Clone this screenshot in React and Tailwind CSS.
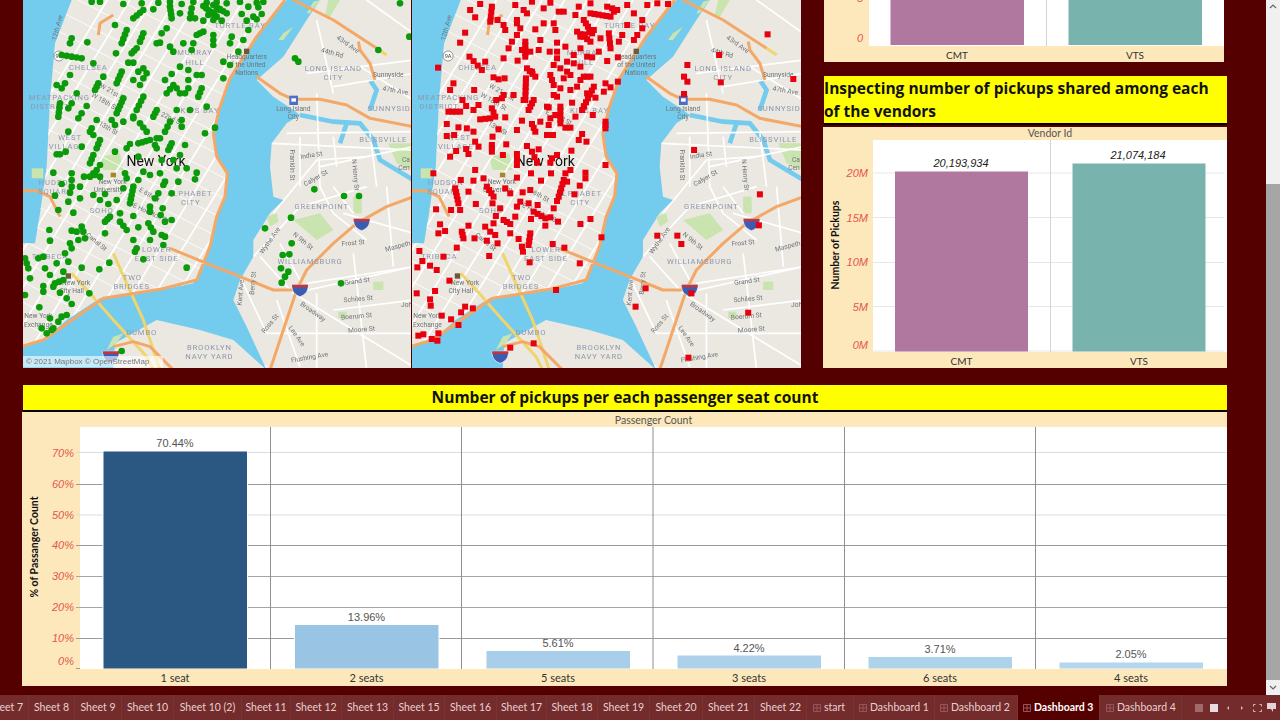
// strokes of dots read off the map: [x, y] is one dot, [x1, y1, x2, y2, n] is a run of n dots
const greenDots = [
  [275,5],[300,5],[370,12],[425,10],[475,8],[510,6],[545,12],[580,6],[620,8],[650,6],[680,10],[720,6],[770,8],[790,6],[1200,10],
  [400,55,430,30,4],[460,28],[510,20,515,55,4],[540,40],[575,25,570,55,3],[610,18,650,50,6],[640,15,680,40,5],[660,30,625,45,3],[745,20],[775,22],[725,42],[760,50],[785,42],[740,62],[770,58],[585,55],[610,62],[640,60],[665,62],
  [345,75],[380,90,365,130,4],[430,100,420,125,3],[410,145,395,160,3],[470,130],[480,128],[510,140,520,155,2],[485,100],[500,85],[550,130],[580,130],[575,150],[610,95,590,105,3],[640,105,640,135,3],[690,130],[695,110],[730,120],[745,90],[715,155],[670,185],[690,195],[670,235],
  [1135,150],[1228,110],[885,175,895,185,2],[215,115,210,130,2],[262,127],[348,160],[385,188],[400,188],[185,165,245,175,5],[280,190],[210,225],[195,250],[170,255],[185,265],[230,280],[310,230],[295,250,285,270,3],[365,215,350,250,4],
  [415,215],[430,205],[440,220],[430,235],[400,240],[420,255],[515,222],[495,240],[540,200],[565,210],[590,225],[605,225],[565,240],[500,280,520,255,3],[530,265],[540,280],[565,265],[555,280],[605,265,595,290,3],
  [370,295,350,340,5],[430,290,410,330,4],[400,350],[470,330,460,350,3],[530,330],[570,330],[620,320],[180,310,175,350,4],[215,310],[205,325],[260,318],[245,340],[235,355],[290,360],[275,385],[270,395],[280,405],[335,360,345,375,2],[370,365],[400,355],[510,365,495,395,3],[545,360,545,380,2],[615,400],[645,383],[205,395],
  [420,370,440,395,3],[415,430,450,420,4],[470,415],[480,415],[515,430,505,450,3],[555,435],[300,420,290,445,3],[245,440],[170,463],[180,463],[197,455],[345,455],[380,445],[390,432],[465,435],[470,445],[280,465,270,490,3],[300,495],[290,510,270,530,3],[285,525],[300,530],[252,530],
  [485,480],[520,480],[540,465],[530,505],[560,505],[590,518],[585,538],[415,470],[430,515],[450,525],[480,520],[375,520],[380,535],[415,540],[495,545],[490,555],[535,545],[160,518],[185,552],[215,520,215,560,3],[240,560],[240,595],[165,587],[210,578],[205,605],[280,585],[315,582],[300,600],[370,565],[350,600],[325,612],[400,560,390,610,5],[475,580,465,595,2],[515,580],
  [450,620],[450,635],[488,625],[482,645],[515,660],[495,665],[175,630],[220,638],[360,640],[330,650,315,665,3],[400,648],[360,665,380,690,3],[415,682],[445,670,460,695,3],[148,690],[150,722],[215,692],[230,695],[245,680],[250,695],[315,700],[235,720],[255,715],[210,730,215,745,2],[400,720],[450,720],[485,705],[495,710],[490,735],[410,745,405,755,2],
  [195,760],[130,770],[115,775],[170,790],[205,785],[75,775,85,805,3],[135,805],[150,825],[190,815],[245,803],[298,808],[328,788],[430,778],[560,803],[90,835],[130,858],[130,875],[165,850,190,840,3],[160,860],[180,878],[75,885],[268,880],[200,895],[215,912],[118,922],[150,955],[185,950],[200,945],[175,965],[160,985],[125,985],[140,1000],[155,990],[365,1053],
  [795,685],[873,653],[875,730],[848,765],[868,763],[843,805],[865,815],[855,830],[845,848],[1023,850],[943,568],[1032,588],[1077,588],
];

const redDots = [
  [180,30],[195,52],[210,12],[245,20,240,65,4],[262,60],[315,15],[320,60],[350,40],[340,30],[365,5],[400,25],[420,8],[445,35],[460,35],[495,45],[505,20],[540,10],
  [520,60,545,100,5],[540,40,600,50,6],[590,20,620,30,3],[650,15],[670,40],[695,60],[695,85],[710,15],[740,10],[772,12],[650,75],[610,35],[500,95,540,125,5],[510,110,550,90,4],[570,115],[595,100,600,145,4],[635,105],[625,125],[680,105],[670,120],
  [280,75],[285,90],[320,70],[330,85],[320,105],[305,125],[295,145],[400,70],[375,88],[435,90],[430,70],[165,98],[150,128],[390,120],[440,128],[465,140],[345,125,345,170,5],[335,150],[360,155],[385,150],[418,155],[440,155],[440,175],[490,165,490,190,2],[510,145],[565,155],[545,172],[590,183],[622,172],[530,170],
  [178,170,215,210,4],[225,185],[280,175],[322,182],[84,203],[430,195,450,205,2],[470,185],[510,200],[350,205,375,230,4],[365,215],[420,225,430,255,3],[470,215,480,225,2],[460,235],[250,232],[265,238],[283,235],[347,235,345,300,6],[520,230,540,230,3],[510,240,500,260,2],[585,250],[600,262],[622,245],[580,275],
  [130,250],[120,270],[192,270],[280,285,275,295,2],[310,285],[450,265],[480,270],[430,285,440,290,2],[550,260,515,330,7],[530,280],[555,293],[830,195],[820,230,830,245,2],[820,282],[930,247],[925,165],[1070,103],[1147,237],
  [157,300],[258,300],[370,300,355,330,4],[340,300],[410,320],[485,308],[115,335,150,335,4],[168,318],[205,315,190,330,2],[245,325,255,350,3],[415,322],[450,320,450,370,5],[435,345],[495,350],[547,345],[520,320],[285,352],[210,358,240,355,3],[110,372],[145,382],[170,385],[190,395],[265,388],[335,362],[320,390],[365,372,375,395,3],[390,365],[420,355],[415,375],[465,383],[480,383],[585,365,585,385,3],
  [110,408],[132,405],[247,410],[410,405],[428,405],[515,402],[505,420],[528,425],[195,425,205,440,2],[245,435,245,455,3],[288,433],[350,438],[385,448],[138,453],[120,470],[168,447],[175,462],[278,465],[320,462,320,495,3],[365,455,380,488,3],[425,475,440,465,2],[420,488],[483,452],[585,495],
  [70,520],[195,510],[152,540],[190,542],[220,535],[320,533],[362,520],[422,520],[480,510],[465,520],[525,518],[525,535],[392,542],[460,540,445,590,5],[470,545],[508,557],[492,583],[440,603],[230,560,250,590,4],[285,565,300,580,2],[337,577],[175,575],[360,570],[135,565,145,610,5],[150,630],[78,628],[123,630],[197,612],[247,610],[330,605,320,620,2],[355,610],[382,615],[430,625],
  [270,625],[370,635,405,655,4],[420,652],[257,648],[250,670],[280,660,300,672,3],[315,650],[362,657],[443,665],[510,672],[540,657],[405,677],[90,673],[85,700],[105,693],[175,677],[225,680],[155,695,160,715,3],[240,695,255,705,2],[193,715],[230,722],[262,730],[300,700],[325,717],[360,700,355,735,4],[427,732],[335,740,338,755,2],[462,743],[573,712],
  [140,743],[28,753],[37,783],[22,802],[60,797],[80,810],[100,770],[237,768],[358,787],[508,790],[118,842],[20,880],[75,873],[60,898],[62,917],[437,870],[188,925],[165,920],[153,937],[95,947],[123,958],[145,975],[85,1000],[40,1003],[25,1007],[65,1017],[82,1022],[300,1043],[370,1030],
  [740,707],[800,707],[812,732],[705,865],[675,920],[842,880],[1012,938],[833,1073],[1047,583],[1044,676],[850,450],
];

function expandDots(list) {
  const out = [];
  list.forEach((d) => {
    if (d.length === 2) out.push(d);
    else {
      const [x1, y1, x2, y2, n] = d;
      for (let i = 0; i < n; i++) {
        const t = n === 1 ? 0 : i / (n - 1);
        out.push([x1 + (x2 - x1) * t, y1 + (y2 - y1) * t]);
      }
    }
  });
  return out;
}

const manhattan = '215,0 860,0 770,110 690,240 660,320 640,400 650,470 682,520 675,590 650,650 630,740 610,800 580,850 480,870 300,895 200,960 130,1020 69,1042 69,730 105,730 120,640 140,500 150,300 165,130';
const brooklyn = '960,0 1240,0 1240,560 1240,1110 800,1110 740,980 700,900 720,840 760,770 760,720 810,640 850,600 820,590 810,500 815,430 860,370 900,345 880,330 820,290 770,240 850,170 920,60';

const orange = [
  'M855,0 L770,110 L690,235 L660,320 L640,400 L650,470 L682,520 L675,590 L650,650 L630,740 L610,790 L590,840 L480,868 L310,895 L230,950 L130,1020 L69,1038',
  'M880,0 L1000,60 L1130,145 M1075,125 L1080,150 L1110,190 L1125,240',
  'M770,230 L840,280 L880,298 L960,298 L1040,315 L1110,355 L1240,380',
  'M510,745 L620,790 L720,830 L820,870 L890,870 L920,810 L1000,730 L1070,670 L1160,620 L1240,590',
  'M890,870 L860,960 L810,1110',
  'M340,45 L300,70 L295,105',
  'M340,1040 L400,1025 L450,1040 L520,1110',
  'M69,572 L110,572 L150,590 L180,650',
];

const yellow = [
  'M340,760 L380,850 L430,960 L480,1110',
  'M215,820 L270,880 L340,960 L440,1070 L460,1110',
  'M1130,145 L1160,165',
];

const whites = [
  'M950,280 L960,560 L1000,640 L1100,720 M815,430 L1240,450 M860,400 L1240,395 M960,500 L1240,440',
  'M820,640 L950,480 L1100,470 M760,770 L900,620 L1100,560 M780,770 L880,880 L1240,800 M720,830 L800,1000',
  'M880,880 L1240,1100 M920,850 L1240,800 M950,880 L950,1110 M1060,760 L1100,1110 M800,1000 L1240,1000',
  'M920,220 L1240,180 M950,60 L1000,280 M1080,200 L1240,300 M1000,260 L1240,220 M1100,0 L1240,100',
  'M840,730 L900,840 M1000,560 L1060,640 M1160,560 L1180,800 M1000,410 L1010,500 M1110,400 L1130,560',
  'M900,410 L900,560 M1000,930 L1240,900 M830,900 L900,1100 M1030,640 L1240,700 M480,1000 L760,1040 M500,1060 L800,1100',
];

const parks = [
  [880,660,960,640,1000,690,950,720],[1060,590,1085,590,1085,635,1060,635],[1165,430,1240,430,1240,510,1190,490],
  [300,470,360,460,370,510,310,510],[95,505,130,505,130,535,95,535],[800,650,830,640,835,665,810,680],
  [985,0,1020,0,990,50,975,45],[850,100,880,80,850,120,835,120],[940,5,960,0,930,40,920,40],[340,1010,370,1000,350,1030,320,1050],
  [1120,845,1150,845,1150,870,1120,870],[1015,935,1040,935,1040,955,1015,955],[1065,610,1085,610,1085,640,1065,640],
];

const districts = [
  ['CHELSEA',265,210],['MEATPACKING',178,300],['DISTRICT',150,328],['WEST',210,421],['VILLAGE',200,448],['HUDSON',170,556],['SQUARE',165,583],
  ['SOHO',305,640],['TRIBECA',150,778],['TWO',397,840],['BRIDGES',395,868],['LOWER',470,756],['EAST SIDE',470,783],['ALPHABET',570,588],['CITY',572,615],
  ['KIPS BAY',600,338],['MURRAY',585,165],['HILL',585,195],['TURTLE BAY',720,83],['LONG ISLAND',1000,214],['CITY',1000,241],['SUNNYSIDE',1175,333],
  ['BLISSVILLE',1150,426],['GREENPOINT',965,626],['WILLIAMSBURG',930,793],['DUMBO',425,1006],['BROOKLYN',628,1051],['NAVY YARD',628,1076],
];

const streets = [
  ['Franklin St',870,495,90],['India St',935,472,-8],['Calyer St',950,540,-30],['N Henry St',1060,525,85],['Wythe Ave',815,725,-55],['N 9th St',905,728,40],
  ['Frost St',1060,735,-5],['Grand St',1072,850,-8],['Schiles St',1075,903,-5],['Boerum St',1070,955,-5],['Moore St',1085,995,-5],['Broadway',935,940,35],
  ['Flushing Ave',930,1078,-10],['Lee Ave',885,1012,55],['Ross St',815,975,-50],['Kent Ave',728,878,-85],['Berry St',765,850,-85],['43rd Ave',1040,138,35],
  ['44th Rd',995,165,15],['47th Ave',1185,278,10],['Sunnyside',1165,230,0],['12th Ave',178,85,-75],['Canal St',285,730,40],['E Houston St',450,645,25],
  ['E 6th St',445,590,30],['E 22nd St',505,358,25],['W 21st St',335,282,30],['W 18th St',310,310,30],['13th St',322,390,30],['Ca',1218,485,0],['Cen',1212,510,0],
  ['Headquarters',740,178,0],['of the United',740,202,0],['Nations',740,226,0],['Long Island',880,332,0],['City',880,356,0],['New York',338,551,0],['University',325,577,0],
  ['New York',228,855,0],['City Hall',215,878,0],['New York',115,955,0],['Exchange',115,980,0],['Maspeth',1195,745,-15],['Joh',1220,920,0],
];

function Shield({ x, y }) {
  return (
    <g>
      <path d={`M${x - 24},${y - 14} h48 c2,20 -8,30 -24,36 c-16,-6 -26,-16 -24,-36 z`} fill="#3c5cb0" stroke="#fff" strokeWidth="2" />
      <rect x={x - 24} y={y - 14} width="48" height="8" fill="#c8343c" />
    </g>
  );
}

// the basemap, drawn in 3x coordinates so it lines up with the crops
function MapBase({ children, id, w }) {
  const avenues = [];
  for (let i = -6; i < 22; i++) avenues.push(`M${i * 68 + 60},1100 L${i * 68 + 730},0`);
  const cross = [];
  for (let i = -2; i < 26; i++) cross.push(`M0,${i * 62 - 120} L900,${i * 62 + 340}`);
  return (
    <svg viewBox="69 0 1164 1104" className={`${w} block h-[368px] shrink-0 blur-[0.4px]`} preserveAspectRatio="none">
      <defs>
        <clipPath id={id}><polygon points={manhattan} /></clipPath>
        <clipPath id={`${id}b`}><polygon points={brooklyn} /></clipPath>
      </defs>
      <rect x="60" y="0" width="1180" height="1110" fill="#73cbee" />
      <polygon points={manhattan} fill="#ebe8e1" />
      <polygon points={brooklyn} fill="#ebe8e1" />
      <polygon points="340,1110 345,1030 470,960 600,990 700,1020 800,1110" fill="#ebe8e1" />
      <path d="M900,345 L1000,365 L1080,370 L1120,420 L1140,480 L1240,540 M1040,370 L1020,430 M1110,240 L1130,270 L1110,330" fill="none" stroke="#73cbee" strokeWidth="14" />
      {parks.map((p, i) => (
        <polygon key={i} points={p.join(' ')} fill="#c9e4ae" />
      ))}
      <g clipPath={`url(#${id})`} fill="none" stroke="#fff">
        <path d={avenues.join(' ')} strokeWidth="5" />
        <path d={cross.join(' ')} strokeWidth="2.5" />
      </g>
      <g clipPath={`url(#${id}b)`}>
        <path d={whites.join(' ')} fill="none" stroke="#fff" strokeWidth="5" />
      </g>
      <path d={yellow.join(' ')} fill="none" stroke="#f0d46c" strokeWidth="9" />
      <path d={orange.join(' ')} fill="none" stroke="#f3a868" strokeWidth="9" strokeLinejoin="round" />
      {districts.map(([t, x, y], i) => (
        <text key={i} x={x} y={y} textAnchor="middle" fontSize="23" letterSpacing="2.5" fill="#8f97ad" fontFamily="Roboto, sans-serif">{t}</text>
      ))}
      {streets.map(([t, x, y, r], i) => (
        <text key={i} x={x} y={y} textAnchor="middle" fontSize="20" fill="#6f7478" fontFamily="Roboto, sans-serif" transform={`rotate(${r} ${x} ${y})`}>{t}</text>
      ))}
      <text x="468" y="497" textAnchor="middle" fontSize="42" fill="#111" fontFamily="Roboto, sans-serif">New York</text>
      <Shield x={1085} y={670} />
      <Shield x={900} y={868} />
      <Shield x={333} y={1068} />
      <rect x="868" y="287" width="26" height="28" fill="#4a6fc4" />
      <rect x="874" y="295" width="14" height="10" fill="#fff" />
      <circle cx="177" cy="168" r="15" fill="#fff" stroke="#666" strokeWidth="2" />
      <text x="177" y="175" textAnchor="middle" fontSize="17" fill="#444" fontFamily="Roboto, sans-serif">9A</text>
      <rect x="732" y="146" width="16" height="16" fill="#6a5a3a" />
      <rect x="332" y="518" width="16" height="14" fill="#a5882c" />
      <rect x="197" y="820" width="16" height="16" fill="#6a5a3a" />
      {children}
    </svg>
  );
}

function Credit() {
  return (
    <g>
      <rect x="69" y="1068" width="420" height="34" fill="#fff" opacity="0.6" />
      <text x="78" y="1093" fontSize="24" fill="#777" fontFamily="Liberation Sans, sans-serif">© 2021 Mapbox © OpenStreetMap</text>
    </g>
  );
}

const fontLabel = 'Lato, sans-serif';
const fontValue = 'Liberation Sans, sans-serif';

function Tick({ x, y, children }) {
  return <text x={x} y={y} textAnchor="end" fontSize="11" fontStyle="italic" fill="#e4574c" fontFamily={fontValue}>{children}</text>;
}

function VendorChart() {
  const grid = [[173, '20M', 177], [217.5, '15M', 222], [262.5, '10M', 266], [306.5, '5M', 311], [351, '0M', 349]];
  return (
    <svg viewBox="823 140 404 228" className="block h-[228px] w-[404px]">
      <rect x="873" y="140" width="354" height="212" fill="#fff" />
      {grid.map(([y]) => <line key={y} x1="873" x2="1224" y1={y} y2={y} stroke="#e6e6e6" />)}
      <line x1="1050.5" x2="1050.5" y1="127" y2="352" stroke="#d4d4d4" />
      <rect x="895" y="171.5" width="133" height="180" fill="#b0779f" />
      <rect x="1072.5" y="163.5" width="133" height="188" fill="#78b4ad" />
      <text x="961" y="167" textAnchor="middle" fontSize="11" fontStyle="italic" fill="#222" fontFamily={fontValue}>20,193,934</text>
      <text x="1138" y="159" textAnchor="middle" fontSize="11" fontStyle="italic" fill="#222" fontFamily={fontValue}>21,074,184</text>
      {grid.map(([y, t, ty]) => <Tick key={t} x="868" y={ty}>{t}</Tick>)}
      <text transform="translate(839 245) rotate(-90)" textAnchor="middle" fontSize="10.5" fontWeight="700" fill="#111" fontFamily={fontLabel}>Number of Pickups</text>
      <text x="961.5" y="365" textAnchor="middle" fontSize="10" fill="#333" fontFamily={fontLabel}>CMT</text>
      <text x="1139" y="365" textAnchor="middle" fontSize="10" fill="#333" fontFamily={fontLabel}>VTS</text>
    </svg>
  );
}

function TopChart() {
  return (
    <svg viewBox="824 0 400 62" className="block h-[62px] w-[400px]">
      <rect x="869" y="0" width="355" height="46" fill="#fff" />
      <line x1="1046.5" x2="1046.5" y1="0" y2="46" stroke="#d4d4d4" />
      <rect x="890.5" y="0" width="133.5" height="45" fill="#b0779f" />
      <rect x="1068.5" y="0" width="133.5" height="45" fill="#78b4ad" />
      <Tick x="863" y="2">5</Tick>
      <Tick x="863" y="42">0</Tick>
      <text x="957" y="59" textAnchor="middle" fontSize="10" fill="#333" fontFamily={fontLabel}>CMT</text>
      <text x="1135" y="59" textAnchor="middle" fontSize="10" fill="#333" fontFamily={fontLabel}>VTS</text>
    </svg>
  );
}

const seatBars = [
  { label: '1 seat', value: '70.44%', x: 103.5, top: 451.5, fill: '#2b5783', labelY: 447 },
  { label: '2 seats', value: '13.96%', x: 295, top: 625, fill: '#9ac4e4', labelY: 621 },
  { label: '5 seats', value: '5.61%', x: 486.5, top: 651, fill: '#a9cee9', labelY: 647 },
  { label: '3 seats', value: '4.22%', x: 677.5, top: 655.5, fill: '#aed1eb', labelY: 652 },
  { label: '6 seats', value: '3.71%', x: 868.5, top: 657, fill: '#afd2eb', labelY: 653 },
  { label: '4 seats', value: '2.05%', x: 1059.5, top: 662.5, fill: '#b4d6ee', labelY: 658 },
];

function SeatChart() {
  const grid = [[452.5, '70%', 457, '#dcdcdc'], [484.5, '60%', 488, '#9a9a9a'], [515, '50%', 519, '#dcdcdc'], [545.5, '40%', 549, '#9a9a9a'], [576.5, '30%', 580, '#a5a5a5'], [607.5, '20%', 611, '#a5a5a5'], [638.5, '10%', 642, '#9a9a9a']];
  const seps = [270.5, 461.5, 653, 844.5, 1035.5];
  return (
    <svg viewBox="22 427 1205 259" className="block h-[259px] w-[1205px]">
      <rect x="80" y="427" width="1147" height="242" fill="#fff" />
      {grid.map(([y, , , c]) => <line key={y} x1="76" x2="1227" y1={y} y2={y} stroke={c} />)}
      {seps.map((x) => <line key={x} x1={x} x2={x} y1="427" y2="669" stroke="#8f8f8f" />)}
      <line x1="76" x2="80" y1="668.5" y2="668.5" stroke="#999" />
      {seatBars.map((b) => (
        <g key={b.label}>
          <rect x={b.x - 1} y={b.top} width="145.5" height={669 - b.top} fill="#fff" />
          <rect x={b.x} y={b.top} width="143.5" height={668.5 - b.top} fill={b.fill} />
          <text x={b.x + 71.5} y={b.labelY} textAnchor="middle" fontSize="11" fill="#555" fontFamily={fontValue}>{b.value}</text>
          <text x={b.x + 71.5} y="682" textAnchor="middle" fontSize="11" fill="#333" fontFamily={fontLabel}>{b.label}</text>
        </g>
      ))}
      {grid.map(([y, t, ty]) => <Tick key={t} x="74" y={ty}>{t}</Tick>)}
      <Tick x="74" y="665">0%</Tick>
      <text transform="translate(38 547) rotate(-90)" textAnchor="middle" fontSize="10.5" fontWeight="700" fill="#111" fontFamily={fontLabel}>% of Passanger Count</text>
    </svg>
  );
}

const tabs = [
  { label: 'Sheet 7', w: 'w-[29px] justify-end pr-[5px]' },
  { label: 'Sheet 8', w: 'w-[46px] justify-center' },
  { label: 'Sheet 9', w: 'w-[47px] justify-center' },
  { label: 'Sheet 10', w: 'w-[52px] justify-center' },
  { label: 'Sheet 10 (2)', w: 'w-[68px] justify-center' },
  { label: 'Sheet 11', w: 'w-[49px] justify-center' },
  { label: 'Sheet 12', w: 'w-[51px] justify-center' },
  { label: 'Sheet 13', w: 'w-[52px] justify-center' },
  { label: 'Sheet 15', w: 'w-[51px] justify-center' },
  { label: 'Sheet 16', w: 'w-[52px] justify-center' },
  { label: 'Sheet 17', w: 'w-[50px] justify-center' },
  { label: 'Sheet 18', w: 'w-[51px] justify-center' },
  { label: 'Sheet 19', w: 'w-[52px] justify-center' },
  { label: 'Sheet 20', w: 'w-[53px] justify-center' },
  { label: 'Sheet 21', w: 'w-[52px] justify-center' },
  { label: 'Sheet 22', w: 'w-[52px] justify-center' },
  { label: 'start', w: 'w-[47px] pl-[6px]', dash: true },
  { label: 'Dashboard 1', w: 'w-[81px] pl-[5px]', dash: true },
  { label: 'Dashboard 2', w: 'w-[83px] pl-[5px]', dash: true },
  { label: 'Dashboard 3', w: 'w-[82px] pl-[5px]', dash: true, active: true },
  { label: 'Dashboard 4', w: 'w-[82px] pl-[6px]', dash: true },
];

function DashGlyph() {
  return (
    <svg width="8" height="8" viewBox="0 0 8 8" className="mr-[3px] shrink-0">
      <path d="M.5.5h7v7h-7zM4 .5v7M.5 4h7" fill="none" stroke="#95565a" strokeWidth="1" />
    </svg>
  );
}

function TabBar() {
  return (
    <div className="flex h-[25px] shrink-0 items-stretch overflow-hidden bg-[#742b2b]">
      {tabs.map((t) => (
        <div
          key={t.label}
          className={`${t.w} flex shrink-0 items-center whitespace-nowrap border-r border-[#7a3333] text-[10.5px] ${t.active ? 'bg-[#550000] font-bold text-white' : 'text-[#e6d2d2]'}`}
        >
          {t.dash && <DashGlyph />}
          {t.label}
        </div>
      ))}
      <div className="flex flex-1 items-center justify-end pr-[4px]">
        <svg width="8" height="8" viewBox="0 0 8 8"><path d="M0 0h8v8H0z" fill="#a06a6a" /></svg>
        <svg width="8" height="8" viewBox="0 0 8 8" className="ml-[7px]"><path d="M0 0h8v8H0z" fill="#eadcdc" /></svg>
        <svg width="6" height="6" viewBox="0 0 6 6" className="ml-[7px]"><path d="M4 1 2 3l2 2z" fill="#d8b8b8" /></svg>
        <svg width="6" height="6" viewBox="0 0 6 6" className="ml-[8px]"><path d="m2 1 2 2-2 2z" fill="#d8b8b8" /></svg>
        <svg width="9" height="8" viewBox="0 0 9 8" className="ml-[8px]"><path d="M.5 2.5v-2h2M6.5.5h2v2M8.5 5.5v2h-2M2.5 7.5h-2v-2" fill="none" stroke="#d8b8b8" /></svg>
        <svg width="9" height="9" viewBox="0 0 9 9" className="ml-[5px]"><path d="M0 0h9v6H6v3L4 6H0z" fill="#e6d2d2" /></svg>
      </div>
    </div>
  );
}

export default function App() {
  const green = expandDots(greenDots);
  const red = expandDots(redDots);
  return (
    <div className="flex h-screen w-screen flex-col overflow-hidden bg-[#550000]">
      <div className="flex min-h-0 flex-1">
        <div className="flex-1 pl-[23px]">
          <div className="flex h-[368px]">
            <div className="flex w-[778px] gap-[1px]">
              <MapBase id="mapa" w="w-[388px]">
                {green.map(([x, y], i) => <circle key={i} cx={x} cy={y} r="10" fill="#0a9a0a" />)}
                <Credit />
              </MapBase>
              <MapBase id="mapb" w="w-[389px]">
                <g transform="translate(63 0)">
                  {red.map(([x, y], i) => <rect key={i} x={x - 9} y={y - 9} width="18" height="18" fill="#e8000e" />)}
                </g>
              </MapBase>
            </div>
            <div className="ml-[22px] w-[404px]">
              <div className="ml-[1px] w-[400px] bg-[#fde8bc]"><TopChart /></div>
              <div className="ml-[1px] mt-[14px] h-[49px] w-[403px] border-b-2 border-black bg-[#ffff00] pt-[1px] font-['Open_Sans',sans-serif] text-[15.5px] font-bold leading-[23px] text-[#111]">
                Inspecting number of pickups shared among each of the vendors
              </div>
              <div className="mt-[2px] h-[241px] bg-[#fde8bc]">
                <div className="h-[13px] pl-[50px] text-center font-['Lato',sans-serif] text-[10.5px] leading-[13px] text-[#555]">Vendor Id</div>
                <VendorChart />
              </div>
            </div>
          </div>
          <div className="mt-[17px] h-[27px] w-[1204px] border-b-2 border-black bg-[#ffff00] text-center font-['Open_Sans',sans-serif] text-[15.5px] font-bold leading-[24px] text-[#111]">
            Number of pickups per each passenger seat count
          </div>
          <div className="ml-[-1px] h-[274px] w-[1205px] bg-[#fde8bc]">
            <div className="h-[15px] pl-[58px] text-center font-['Lato',sans-serif] text-[10.5px] leading-[17px] text-[#555]">Passenger Count</div>
            <SeatChart />
          </div>
        </div>
        <div className="flex w-[14px] flex-col bg-[#f0f0f0]">
          <div className="flex h-[184px] justify-center pt-[4px]">
            <svg width="8" height="5" viewBox="0 0 8 5"><path d="m1 4 3-3 3 3" fill="none" stroke="#666" strokeWidth="1.2" /></svg>
          </div>
          <div className="flex-1 bg-[#a6a6a6]" />
          <div className="flex h-[15px] items-center justify-center">
            <svg width="8" height="5" viewBox="0 0 8 5"><path d="m1 1 3 3 3-3" fill="none" stroke="#666" strokeWidth="1.2" /></svg>
          </div>
        </div>
      </div>
      <div className="font-['Lato',sans-serif]"><TabBar /></div>
    </div>
  );
}
